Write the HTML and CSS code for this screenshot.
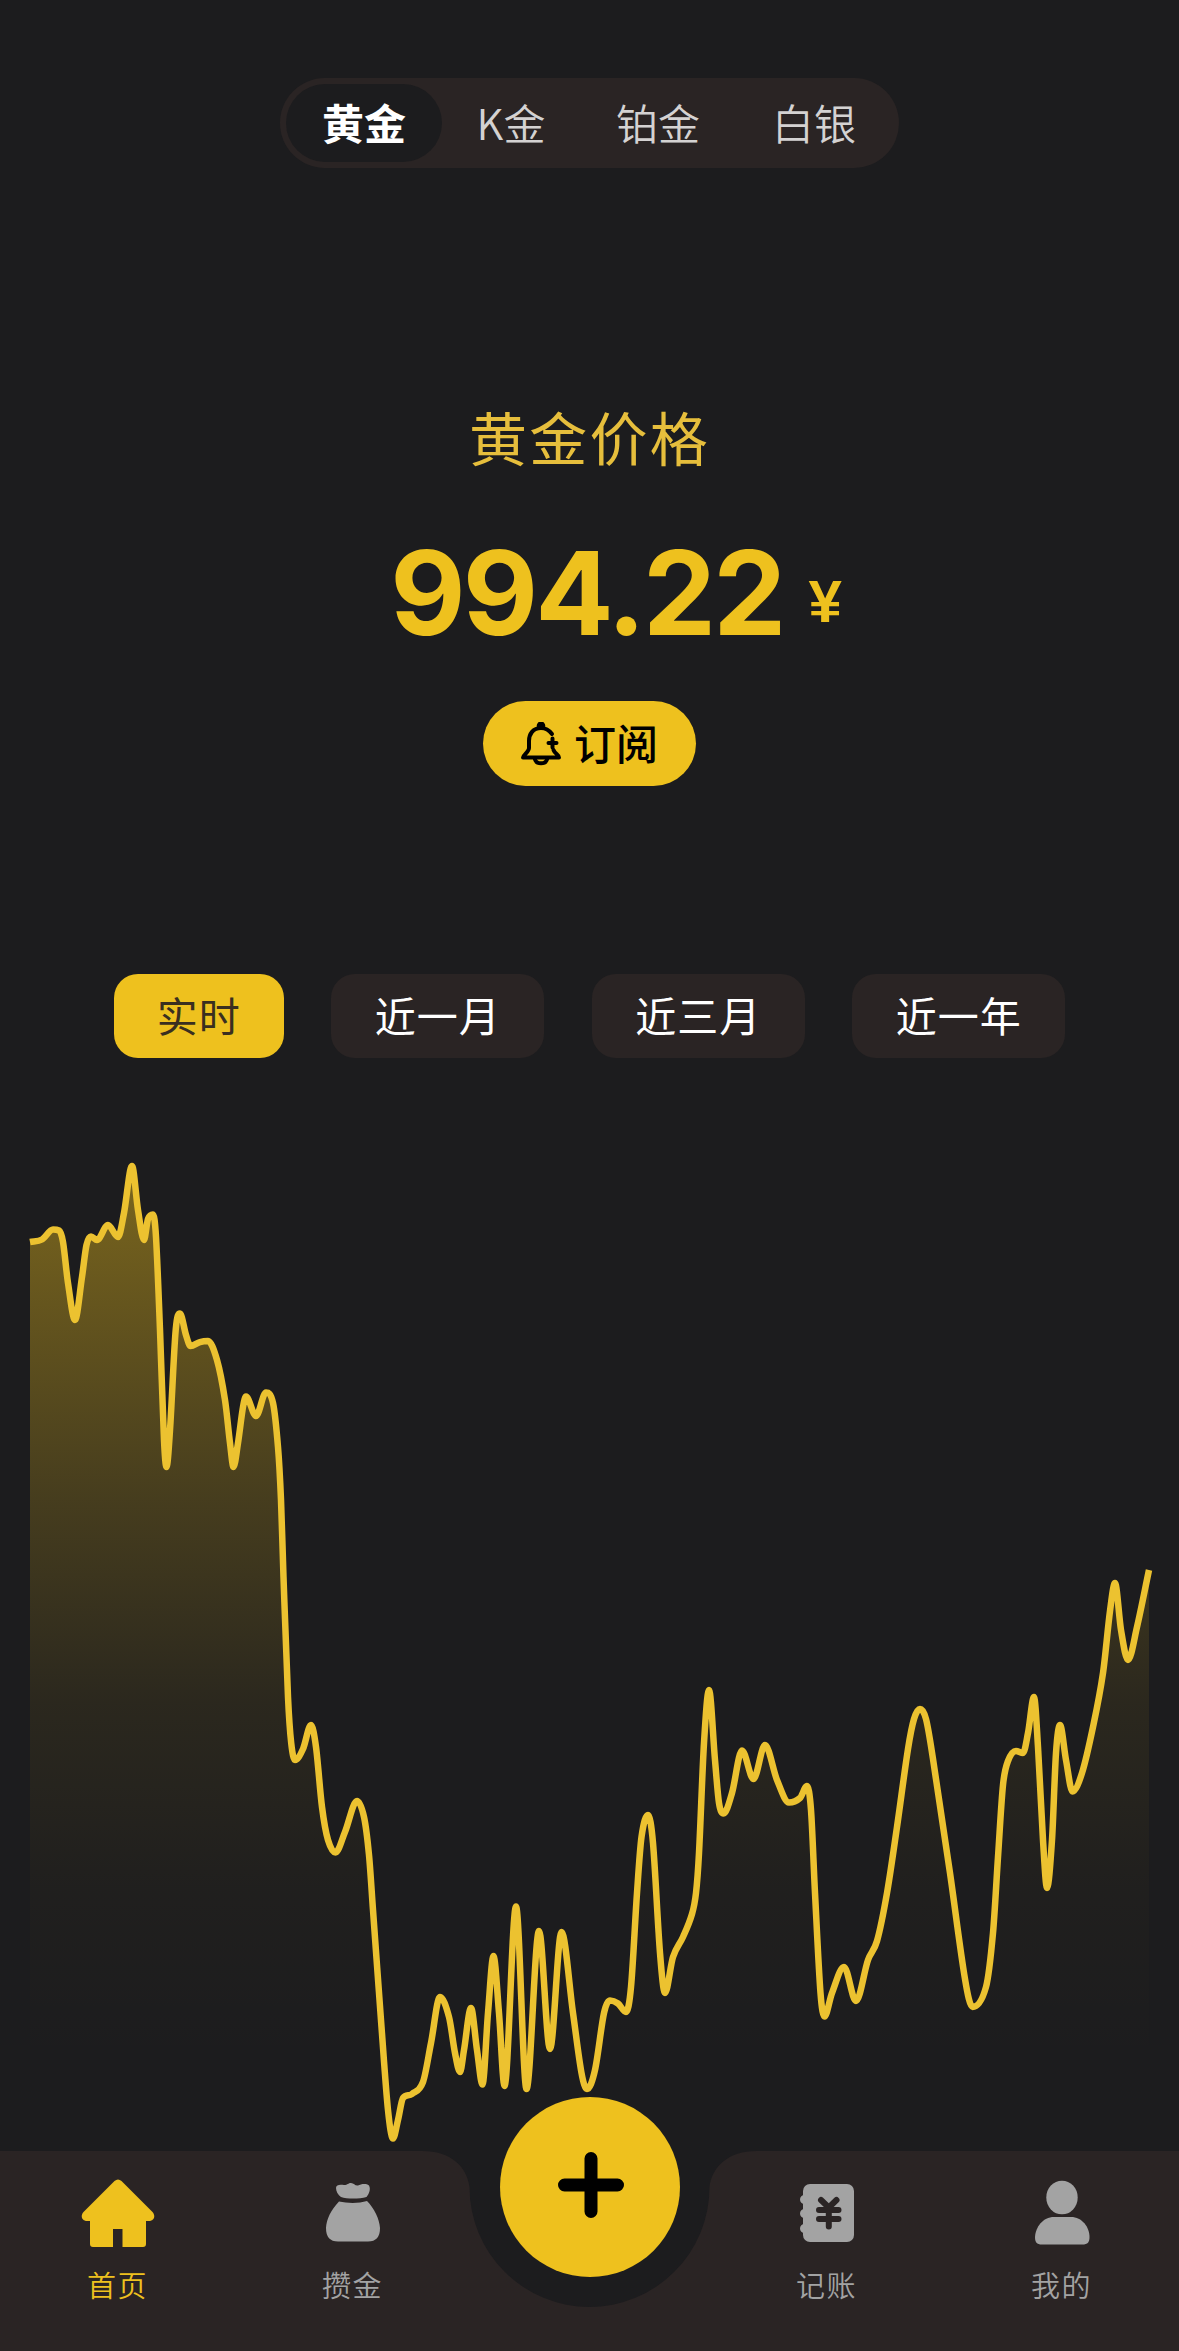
FILE: index.html
```
<!DOCTYPE html>
<html lang="zh-CN">
<head>
    <meta charset="UTF-8">
    <meta name="viewport" content="width=device-width, initial-scale=1.0">
    <title>黄金价格</title>
    <link rel="stylesheet" href="styles.css">
</head>
<body>

    <div class="metal-tabs">
        <div class="metal-tab active">黄金</div>
        <div class="metal-tab short">K金</div>
        <div class="metal-tab">铂金</div>
        <div class="metal-tab">白银</div>
    </div>

    <div class="price-panel">
        <div class="price-title">黄金价格</div>
        <div class="price-row">
            <span class="price-value">994.22</span>
            <span class="price-unit">¥</span>
        </div>
        <button class="subscribe-button">
            <svg class="bell-icon" viewBox="0 0 40 44" fill="none" stroke="#000" stroke-width="4" stroke-linecap="round" stroke-linejoin="round">
                <path d="M31 12C28 8 24 6 20 6C12 6 8 12 8 19V26C8 30 2 33 2 35.500H38C38 33 34 32 32.500 28"/>
                <path d="M31.500 16.500V25.500M27.500 21H35.500"/>
                <path d="M14 37.500C15.500 42.500 24.500 42.500 26 37.500"/>
                <circle cx="20" cy="3.800" r="2.300" fill="#000"/>
            </svg>
            <span>订阅</span>
        </button>
    </div>

    <div class="range-tabs">
        <div class="range-tab active">实时</div>
        <div class="range-tab">近一月</div>
        <div class="range-tab">近三月</div>
        <div class="range-tab">近一年</div>
    </div>

    <svg class="chart" viewBox="0 1140 1179 1011">
        <defs>
            <linearGradient id="area-fill" gradientUnits="userSpaceOnUse" x1="0" y1="1165" x2="0" y2="2065">
                <stop offset="0" stop-color="#efc11d" stop-opacity="0.45"/>
                <stop offset="0.37" stop-color="#efc11d" stop-opacity="0.2"/>
                <stop offset="0.6" stop-color="#efc11d" stop-opacity="0.07"/>
                <stop offset="0.8" stop-color="#efc11d" stop-opacity="0.02"/>
                <stop offset="1" stop-color="#efc11d" stop-opacity="0"/>
            </linearGradient>
        </defs>
        <path id="chart-area" fill="url(#area-fill)"/>
        <path id="chart-line" fill="none" stroke="#ecc230" stroke-width="6.5" stroke-linejoin="round"/>
    </svg>

    <div class="nav">
        <svg class="nav-shape" viewBox="0 0 1179 200">
            <path fill="#2a2424" d="M0 0H422C451 0 467 16 469.500 36A120 120 0 0 0 709.500 36C712 16 728 0 757 0H1179V200H0Z"/>
        </svg>

        <div class="nav-item active">
            <svg class="nav-icon" viewBox="0 0 74 68">
                <path fill="currentColor" d="M33.500 2Q37 -1 40.500 2L71.500 33C75 37 73 42 68 42H65V65Q65 68 62 68H41.500V50H32V68H12Q9 68 9 65V42H6C1 42 -1 37 2.500 33Z"/>
            </svg>
            <span>首页</span>
        </div>

        <div class="nav-item saving">
            <svg class="nav-icon" viewBox="0 0 74 68">
                <path fill="currentColor" d="M20 9C20 5.500 24 5.500 28 6C32 6 32 4 35 4C38 4 39 7 42 6.500C45 5 50 4 53 6.500C55 10 53 15 50.500 18C43 20 31 20 25 18C22 16 20 12 20 9Z"/>
                <path fill="currentColor" d="M23 22.500C32 24.500 43 24.500 51 22C58 29 63.500 40 64 49C64 58 60 62.500 52 62.500H22C14 62.500 10 58 10 49C10.500 40 15 31 23 22.500Z"/>
            </svg>
            <span>攒金</span>
        </div>

        <div class="nav-item ledger">
            <svg class="nav-icon" viewBox="0 0 74 68">
                <rect x="13" y="5" width="51" height="58" rx="7" fill="currentColor"/>
                <path stroke="currentColor" stroke-width="9" stroke-linecap="round" d="M14.500 20.500V20.600M14.500 34.500V34.600M14.500 49.500V49.600"/>
                <path fill="none" stroke="#2a2424" stroke-width="6" stroke-linecap="round" stroke-linejoin="round" d="M31 21L38.800 28.500L46.500 21M29 31H48.500M29 40H48.500M38.800 29V47.500"/>
            </svg>
            <span>记账</span>
        </div>

        <div class="nav-item mine">
            <svg class="nav-icon" viewBox="0 0 74 68">
                <ellipse cx="37" cy="18.500" rx="15.700" ry="16.800" fill="currentColor"/>
                <path fill="currentColor" d="M29 38H46C57 38 64.500 48 64.500 58C64.500 63 63 65.500 57 65.500H17C11.500 65.500 10 63 10 58C10.500 48 18 38 29 38Z"/>
            </svg>
            <span>我的</span>
        </div>

        <button class="add-button">
            <svg viewBox="0 0 66 66" width="66" height="66" stroke="#000" stroke-width="13" stroke-linecap="round">
                <path d="M33 6.500V59.500M6.500 33H59.500"/>
            </svg>
        </button>
    </div>

    <script src="chart.js"></script>
</body>
</html>
```
FILE: styles.css
```
body {
    margin: 0;
    width: 1179px;
    height: 2351px;
    display: flex;
    flex-direction: column;
    align-items: center;
    background-color: #1c1c1e;
    font-family: "Noto Sans CJK SC", sans-serif;
    font-weight: 400;
    overflow: hidden;
}

button {
    border: none;
    padding: 0;
    font-family: inherit;
    background-color: #eec11e;
}

/* Metal switcher */
.metal-tabs {
    display: flex;
    box-sizing: border-box;
    width: 619px;
    height: 90px;
    margin-top: 78px;
    padding: 6px;
    border-radius: 45px;
    background-color: #2a2424;
}

.metal-tab {
    width: 156px;
    height: 78px;
    line-height: 75px;
    border-radius: 39px;
    text-align: center;
    font-size: 42px;
    font-weight: 350;
    color: #d4d2d2;
}

.metal-tab.short {
    width: 138px;
}

.metal-tab.active {
    background-color: #1c1c1e;
    color: #fff;
    font-weight: bold;
}

/* Current price */
.price-panel {
    display: flex;
    flex-direction: column;
    align-items: center;
    margin-top: 223px;
    color: #eec11e;
}

.price-title {
    height: 90px;
    line-height: 90px;
    font-size: 58px;
    font-weight: 400;
    letter-spacing: 2.2px;
    color: #e6be3c;
}

.price-row {
    display: flex;
    align-items: baseline;
    height: 140px;
    line-height: 140px;
    margin-top: 42px;
    padding-left: 53px;
    font-family: Inter, "Noto Sans CJK SC", sans-serif;
}

.price-value {
    font-size: 116px;
    font-weight: 700;
    letter-spacing: -2.8px;
}

.price-unit {
    position: relative;
    top: -13px;
    margin-left: 25px;
    font-family: "Liberation Sans", sans-serif;
    font-size: 60px;
    font-weight: bold;
}

.subscribe-button {
    display: flex;
    align-items: center;
    justify-content: center;
    gap: 13px;
    width: 213px;
    height: 85px;
    margin-top: 38px;
    border-radius: 43px;
    font-size: 42px;
    font-weight: 500;
    color: #000;
}

.subscribe-button span {
    margin-bottom: 4px;
}

.bell-icon {
    width: 40px;
    height: 44px;
}

/* Time range */
.range-tabs {
    display: flex;
    gap: 47.5px;
    margin-top: 188px;
}

.range-tab {
    width: 213px;
    height: 84px;
    line-height: 81px;
    border-radius: 24px;
    text-align: center;
    font-size: 41px;
    letter-spacing: 1px;
    background-color: #2a2424;
    color: #fff;
}

.range-tab.active {
    width: 170px;
    background-color: #eec11e;
    color: #3a2f20;
}

.chart {
    display: block;
    width: 1179px;
    height: 1011px;
    margin-top: 82px;
}

/* Bottom navigation */
.nav {
    position: relative;
    display: flex;
    width: 1179px;
    height: 200px;
}

.nav-shape {
    position: absolute;
    left: 0;
    top: 0;
    width: 1179px;
    height: 200px;
}

.nav-item {
    position: relative;
    display: flex;
    flex-direction: column;
    align-items: center;
    width: 235px;
    padding-top: 28px;
    font-size: 29px;
    font-weight: 350;
    letter-spacing: 1.5px;
    color: #a3a3a3;
}

.nav-item span {
    line-height: 44px;
    margin-top: 15px;
}

.nav-item.active {
    color: #eec11e;
}

.nav-item.ledger {
    margin-left: 239px;
}

.nav-icon {
    width: 74px;
    height: 68px;
}

/* Floating button sits in the notch */
.add-button {
    position: absolute;
    left: 500px;
    top: -54px;
    display: flex;
    align-items: center;
    justify-content: center;
    width: 180px;
    height: 180px;
    border-radius: 50%;
}

.add-button svg {
    margin: 0 0 4px 2px;
}
```
FILE: chart.js
```
// Price curve points: x, y
const points = [
    [30, 1242], [42, 1239.5], [53, 1229.5], [59, 1230.5], [63, 1242], [68, 1283], [75, 1320], [82, 1277],
    [86.5, 1245], [91, 1236.5], [97, 1240], [108, 1225], [118, 1237], [124, 1213], [132, 1166], [138, 1210],
    [144, 1240], [148, 1219], [153, 1214.5], [156, 1237], [160, 1330], [164, 1440], [166.5, 1467], [170, 1430],
    [175.7, 1330], [180, 1313.5], [186, 1335], [190.5, 1346], [200, 1342], [208, 1341], [217, 1360], [225, 1400],
    [230, 1443], [233.5, 1467], [238, 1443], [243, 1407], [246, 1396.5], [256, 1416], [266, 1392.5], [273, 1403],
    [278, 1447], [281, 1500], [283.5, 1577], [288, 1697], [291.2, 1743], [295, 1760], [303, 1749], [311, 1725],
    [316, 1747], [322, 1807], [328, 1840], [335.5, 1852.5], [345, 1832], [357, 1801], [364, 1817], [369, 1855],
    [373, 1910], [381.5, 2027], [388, 2110], [393, 2138.5], [398, 2120], [403, 2098], [412, 2094], [423, 2082],
    [431, 2043], [440, 1997], [449, 2017], [455, 2053], [460, 2072], [464, 2050], [471, 2008], [477, 2050],
    [482.5, 2084.5], [488, 2013], [493.5, 1956], [499, 2013], [504.5, 2086], [516, 1906.5], [526.5, 2089],
    [539, 1931], [550, 2049], [561.5, 1932], [573, 2013], [581.5, 2073], [587, 2089], [595, 2070], [604, 2013],
    [610, 2000.5], [618, 2003.5], [626, 2012], [631, 1987], [637, 1893], [641.5, 1837], [648, 1815],
    [653, 1843], [660, 1953], [665, 1993], [673, 1957], [683, 1937], [692, 1914], [696, 1893], [699, 1853],
    [704, 1743], [709, 1690], [715, 1760], [719, 1803], [723.5, 1813.5], [732, 1793], [742, 1750.5],
    [753.5, 1779], [765, 1745], [777, 1780], [789, 1802.5], [800, 1798], [807, 1786], [811, 1810],
    [815, 1893], [820.5, 1993], [824.5, 2016.5], [832, 1993], [844, 1967], [856, 2001], [868, 1960],
    [877, 1941], [887, 1893], [897, 1827], [908, 1749], [914, 1719], [920, 1709], [926, 1719], [933, 1759],
    [950, 1873], [965, 1979], [972.5, 2007], [986, 1987], [993, 1933], [998, 1857], [1003, 1785], [1008, 1761],
    [1016, 1751], [1023, 1753], [1028, 1733], [1034, 1697], [1038, 1747], [1043, 1840], [1047, 1888],
    [1052, 1840], [1056, 1753], [1060, 1725], [1066, 1760], [1072.5, 1791.5], [1082, 1773], [1093, 1727],
    [1103, 1673], [1110, 1611], [1115, 1583], [1121, 1630], [1128, 1660], [1137, 1627], [1149, 1570]
];

// Cubic smoothing, flat at every turning point and never overshooting
function smoothPath(pts) {
    const n = pts.length;
    const slope = [];
    for (let i = 0; i < n - 1; i++) {
        slope.push((pts[i + 1][1] - pts[i][1]) / (pts[i + 1][0] - pts[i][0]));
    }

    const tangent = [slope[0]];
    for (let i = 1; i < n - 1; i++) {
        const a = slope[i - 1];
        const b = slope[i];
        const mean = (pts[i + 1][1] - pts[i - 1][1]) / (pts[i + 1][0] - pts[i - 1][0]);
        const limit = 3 * Math.min(Math.abs(a), Math.abs(b));
        tangent.push(a * b <= 0 ? 0 : Math.sign(mean) * Math.min(Math.abs(mean), limit));
    }
    tangent.push(slope[n - 2]);

    let d = 'M' + pts[0][0] + ' ' + pts[0][1];
    for (let i = 0; i < n - 1; i++) {
        const [x0, y0] = pts[i];
        const [x1, y1] = pts[i + 1];
        const h = (x1 - x0) / 3;
        d += 'C' + [x0 + h, y0 + tangent[i] * h, x1 - h, y1 - tangent[i + 1] * h, x1, y1].join(' ');
    }
    return d;
}

const line = smoothPath(points);
document.getElementById('chart-line').setAttribute('d', line);
document.getElementById('chart-area').setAttribute('d', line + 'V2151H30Z');
```
